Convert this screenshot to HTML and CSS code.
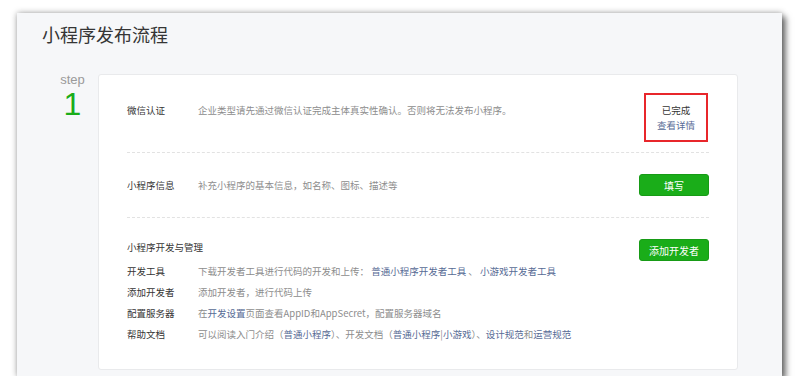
FILE: index.html
```html
<!DOCTYPE html>
<html lang="zh-CN">
<head>
<meta charset="utf-8">
<title>小程序发布流程</title>
<link rel="stylesheet" href="styles.css">
</head>
<body>
<div class="panel">
  <h1 class="title">小程序发布流程</h1>
  <div class="flow">
    <div class="step">
      <div class="step-word">step</div>
      <div class="step-num">1</div>
    </div>
    <div class="card">
      <div class="row row-first">
        <div class="label mt">微信认证</div>
        <div class="desc mt">企业类型请先通过微信认证完成主体真实性确认。否则将无法发布小程序。</div>
        <div class="status">
          <div class="done">已完成</div>
          <a class="link">查看详情</a>
        </div>
      </div>
      <div class="row row-mid">
        <div class="label">小程序信息</div>
        <div class="desc">补充小程序的基本信息，如名称、图标、描述等</div>
        <a class="btn">填写</a>
      </div>
      <div class="row-last">
        <div class="head">
          <div class="label head-label">小程序开发与管理</div>
          <a class="btn">添加开发者</a>
        </div>
        <ul class="sub">
          <li><span class="label">开发工具</span><span class="desc">下载开发者工具进行代码的开发和上传： <a class="link">普通小程序开发者工具</a> 、 <a class="link">小游戏开发者工具</a></span></li>
          <li><span class="label">添加开发者</span><span class="desc">添加开发者，进行代码上传</span></li>
          <li><span class="label">配置服务器</span><span class="desc">在<a class="link">开发设置</a>页面查看AppID和AppSecret，配置服务器域名</span></li>
          <li><span class="label">帮助文档</span><span class="desc">可以阅读入门介绍（<a class="link">普通小程序</a>）、开发文档（<a class="link">普通小程序</a>|<a class="link">小游戏</a>）、<a class="link">设计规范</a>和<a class="link">运营规范</a></span></li>
        </ul>
      </div>
    </div>
  </div>
</div>
</body>
</html>
```

FILE: styles.css
```css
html, body {
  margin: 0;
  padding: 0;
  background: #ffffff;
}
body {
  font-family: "Noto Sans CJK SC", "Liberation Sans", sans-serif;
  padding: 13px 0 0 17px;
}
.panel {
  width: 765px;
  height: 363px;
  box-sizing: border-box;
  background: #f6f7f9;
  box-shadow: 4px 4px 6px rgba(0, 0, 0, 0.5), 0 0 6px rgba(0, 0, 0, 0.35);
  padding: 9px 44px 6px 0;
}
.title {
  margin: 0 0 28px 25px;
  font-size: 18px;
  line-height: 24px;
  font-weight: normal;
  color: #353535;
  letter-spacing: 0;
}
.flow {
  display: flex;
  align-items: flex-start;
}
.step {
  width: 81px;
  box-sizing: border-box;
  padding-left: 30px;
  text-align: center;
  font-family: "Liberation Sans", "Open Sans", sans-serif;
}
.step-word {
  font-size: 13px;
  line-height: 13px;
  color: #9a9a9a;
  margin-top: -1px;
}
.step-num {
  font-size: 32px;
  line-height: 28px;
  margin-top: 4px;
  color: #1aad19;
}
.card {
  flex: 1;
  height: 296px;
  box-sizing: border-box;
  background: #ffffff;
  border: 1px solid #e9eaec;
  border-radius: 3px;
  padding: 0 28px 0 28px;
  font-size: 9.5px;
}
.label {
  width: 71px;
  flex: none;
  color: #353535;
  line-height: 15px;
}
.desc {
  flex: 1;
  color: #8d8d8d;
  line-height: 15px;
}
.link {
  color: #576b95;
  text-decoration: none;
}
.row {
  display: flex;
  border-bottom: 1px dashed #e2e2e2;
}
.row-first {
  align-items: flex-start;
  padding: 18px 0 10px 0;
}
.mt {
  margin-top: 10px;
}
.status {
  width: 60px;
  margin-right: 1px;
  border: 2px solid #e8262b;
  padding: 8px 0 7px 0;
  text-align: center;
  line-height: 15px;
}
.done {
  color: #353535;
}
.status .link {
  display: block;
}
.row-mid {
  align-items: center;
  padding: 21px 0 21px 0;
}
.btn {
  width: 70px;
  height: 22px;
  box-sizing: border-box;
  flex: none;
  display: flex;
  align-items: center;
  justify-content: center;
  background: #1aad19;
  border: 1px solid #179b16;
  border-radius: 3px;
  color: #ffffff;
  font-size: 10px;
}
.row-last {
  padding-top: 21px;
}
.head {
  display: flex;
  justify-content: space-between;
  align-items: flex-start;
}
.head-label {
  width: auto;
  line-height: 16px;
}
.sub {
  list-style: none;
  margin: 0;
  padding: 0;
}
.sub li {
  display: flex;
  line-height: 21px;
  height: 21px;
}
.sub .label, .sub .desc {
  line-height: 21px;
}
```
